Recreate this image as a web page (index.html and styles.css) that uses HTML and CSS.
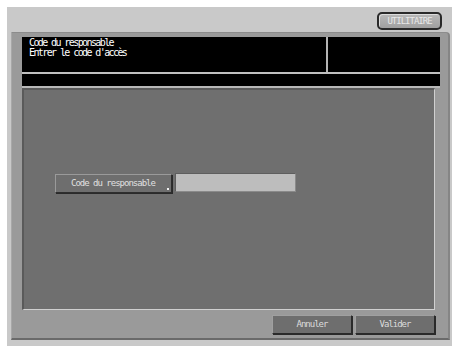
FILE: index.html
```html
<!DOCTYPE html>
<html lang="fr">
<head>
<meta charset="utf-8">
<link rel="stylesheet" href="styles.css">
</head>
<body>
<div class="screen">
  <div class="topbar">
    <div class="util-btn">Utilitaire</div>
  </div>
  <div class="panel">
    <div class="header">
      <div class="msg">Code du responsable<br>Entrer le code d'accès</div>
      <div class="side"></div>
    </div>
    <div class="status"></div>
    <div class="work">
      <div class="field-row">
        <div class="field-btn">Code du responsable<span class="corner"></span></div>
        <div class="field-input"></div>
      </div>
    </div>
    <div class="actions">
      <div class="act-btn">Annuler</div>
      <div class="act-btn">Valider</div>
    </div>
  </div>
</div>
</body>
</html>
```

FILE: styles.css
```css
html, body {
  margin: 0;
  padding: 0;
  background: #ffffff;
  width: 457px;
  height: 346px;
  overflow: hidden;
}
.screen {
  margin: 7px 0 0 7px;
  width: 445px;
  height: 339px;
  background: #c9c9c9;
  font-family: "DejaVu Sans Mono", "Liberation Mono", monospace;
  font-size: 9px;
  letter-spacing: -1px;
}
.topbar {
  height: 25px;
  display: flex;
  justify-content: flex-end;
  align-items: flex-start;
  padding-right: 10px;
  box-sizing: border-box;
  padding-top: 5px;
}
.util-btn {
  width: 61px;
  height: 14px;
  border: 2px solid #2a2a2a;
  border-radius: 5px;
  background: linear-gradient(#b8b8b8, #a0a0a0);
  color: #e8e8e8;
  text-transform: uppercase;
  font-size: 9px;
  line-height: 14px;
  text-align: center;
  box-shadow: inset 1px 1px 0 #dcdcdc;
}
.panel {
  margin-left: 4px;
  width: 439px;
  height: 308px;
  box-sizing: border-box;
  background: #9a9a9a;
  border-top: 1px solid #8c8c8c;
  border-left: 1px solid #a8a8a8;
  border-right: 2px solid #858585;
  border-bottom: 2px solid #6a6a6a;
  border-top-right-radius: 4px;
  padding: 4px 8px 0 10px;
}
.header {
  display: flex;
  height: 35px;
  background: #000;
  border-bottom: 2px solid #c0c0c0;
}
.msg {
  width: 306px;
  color: #ffffff;
  padding: 1px 0 0 7px;
  box-sizing: border-box;
  line-height: 10px;
  font-size: 10px;
  letter-spacing: -1.6px;
  border-right: 2px solid #b4b4b4;
}
.side {
  flex: 1;
}
.status {
  height: 12px;
  background: #000;
  border-bottom: 2px solid #b8b8b8;
}
.work {
  margin-top: 0;
  width: 413px;
  height: 222px;
  box-sizing: border-box;
  background: #6f6f6f;
  border-top: 2px solid #5a5a5a;
  border-left: 2px solid #5a5a5a;
  border-bottom: 1px solid #d0d0d0;
  border-right: 1px solid #d0d0d0;
  padding: 84px 0 0 31px;
}
.field-row {
  display: flex;
  gap: 3px;
  align-items: flex-start;
}
.field-btn {
  position: relative;
  width: 117px;
  height: 19px;
  box-sizing: border-box;
  background: #6e6e6e;
  border: 1px solid #2e2e2e;
  border-top-color: #9a9a9a;
  border-left-color: #9a9a9a;
  box-shadow: 1px 1px 0 #2a2a2a;
  color: #e0e0e0;
  line-height: 17px;
  padding-left: 15px;
}
.corner {
  position: absolute;
  right: 2px;
  bottom: 2px;
  width: 2px;
  height: 2px;
  background: #f0f0f0;
}
.field-input {
  width: 121px;
  height: 19px;
  box-sizing: border-box;
  margin-top: -1px;
  background: #bdbdbd;
  border: 1px solid #5e5e5e;
  border-bottom-color: #8a8a8a;
  border-right-color: #8a8a8a;
}
.actions {
  display: flex;
  justify-content: flex-end;
  gap: 3px;
  padding-right: 5px;
  margin-top: 5px;
}
.act-btn {
  width: 80px;
  height: 19px;
  box-sizing: border-box;
  background: #6e6e6e;
  border: 1px solid #2a2a2a;
  border-top-color: #a0a0a0;
  border-left-color: #a0a0a0;
  box-shadow: 1px 1px 0 #2a2a2a;
  color: #dcdcdc;
  text-align: center;
  line-height: 17px;
}
```
